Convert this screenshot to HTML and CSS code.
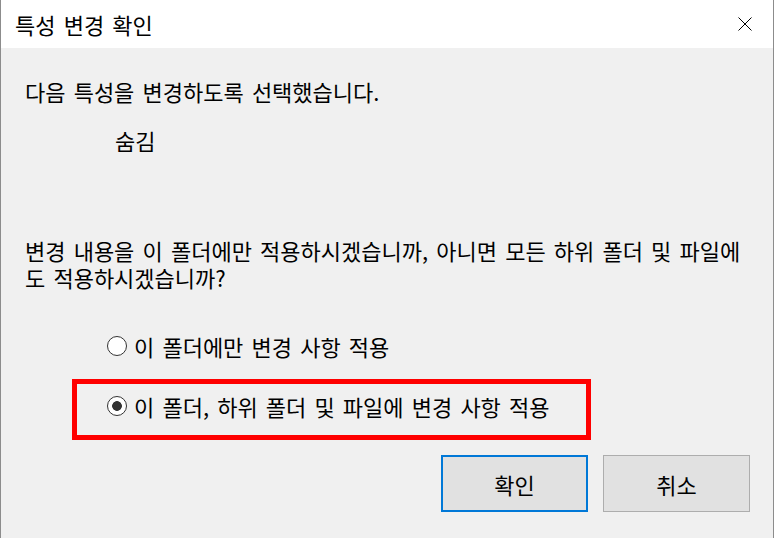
FILE: index.html
```html
<!DOCTYPE html>
<html lang="ko">
<head>
  <meta charset="UTF-8">
  <title>특성 변경 확인</title>
  <link rel="stylesheet" href="styles.css">
</head>
<body>
  <div class="dialog">
    <div class="titlebar">
      <span class="title">특성 변경 확인</span>
      <svg class="close" width="14" height="14" viewBox="0 0 14 14">
        <path d="M0.5 0.5 L13.5 13.5 M13.5 0.5 L0.5 13.5" stroke="#000" stroke-width="1" fill="none"/>
      </svg>
    </div>

    <div class="content">
      <p class="intro">다음 특성을 변경하도록 선택했습니다.</p>
      <p class="attr">숨김</p>
      <p class="question">변경 내용을 이 폴더에만 적용하시겠습니까, 아니면 모든 하위 폴더 및 파일에<br>도 적용하시겠습니까?</p>

      <div class="options">
        <label class="option">
          <input type="radio" name="scope" class="radio">
          <span>이 폴더에만 변경 사항 적용</span>
        </label>
        <label class="option highlighted">
          <input type="radio" name="scope" class="radio" checked>
          <span>이 폴더, 하위 폴더 및 파일에 변경 사항 적용</span>
        </label>
      </div>

      <div class="buttons">
        <button class="btn btn-default">확인</button>
        <button class="btn">취소</button>
      </div>
    </div>
  </div>
</body>
</html>
```

FILE: styles.css
```css
body {
  margin: 0;
  background: #fff;
  font-family: "Noto Sans CJK KR", "Noto Sans", sans-serif;
  font-size: 22px;
  word-spacing: 2px;
  color: #000;
}

.dialog {
  width: 774px;
  height: 538px;
  box-sizing: border-box;
  border-left: 1px solid #8c8c8c;
  border-right: 1px solid #8c8c8c;
  background: #f0f0f0;
  overflow: hidden;
}

.titlebar {
  height: 48px;
  background: #fff;
  display: flex;
  align-items: center;
  justify-content: space-between;
  padding: 0 21px 0 14px;
}

.title {
  line-height: 27px;
}

.content {
  padding: 30px 23px 0 24px;
}

p {
  margin: 0;
  line-height: 27px;
}

.attr {
  margin-top: 22px;
  padding-left: 90px;
}

.question {
  margin-top: 83px;
  white-space: nowrap;
}

.options {
  margin-top: 41px;
  padding-left: 82px;
  display: flex;
  flex-direction: column;
  align-items: flex-start;
  gap: 33px;
}

.option {
  position: relative;
  display: flex;
  align-items: center;
  gap: 7px;
  height: 27px;
}

.radio {
  appearance: none;
  margin: 0;
  width: 20px;
  height: 20px;
  border: 1px solid #333;
  border-radius: 50%;
  background: #fff;
}

.radio:checked {
  background: radial-gradient(circle, #333 0 4.5px, #fff 5.2px);
}

/* red annotation box round the chosen option */
.highlighted::after {
  content: '';
  position: absolute;
  left: -35px;
  top: -13px;
  width: 519px;
  height: 61px;
  box-sizing: border-box;
  border: 5px solid #ff0000;
}

.buttons {
  margin-top: 36px;
  display: flex;
  justify-content: flex-end;
  gap: 15px;
}

.btn {
  width: 147px;
  height: 57px;
  padding: 0;
  background: #e1e1e1;
  border: 1px solid #adadad;
  font: inherit;
  color: #000;
}

.btn-default {
  border: 2px solid #0078d7;
}
```
